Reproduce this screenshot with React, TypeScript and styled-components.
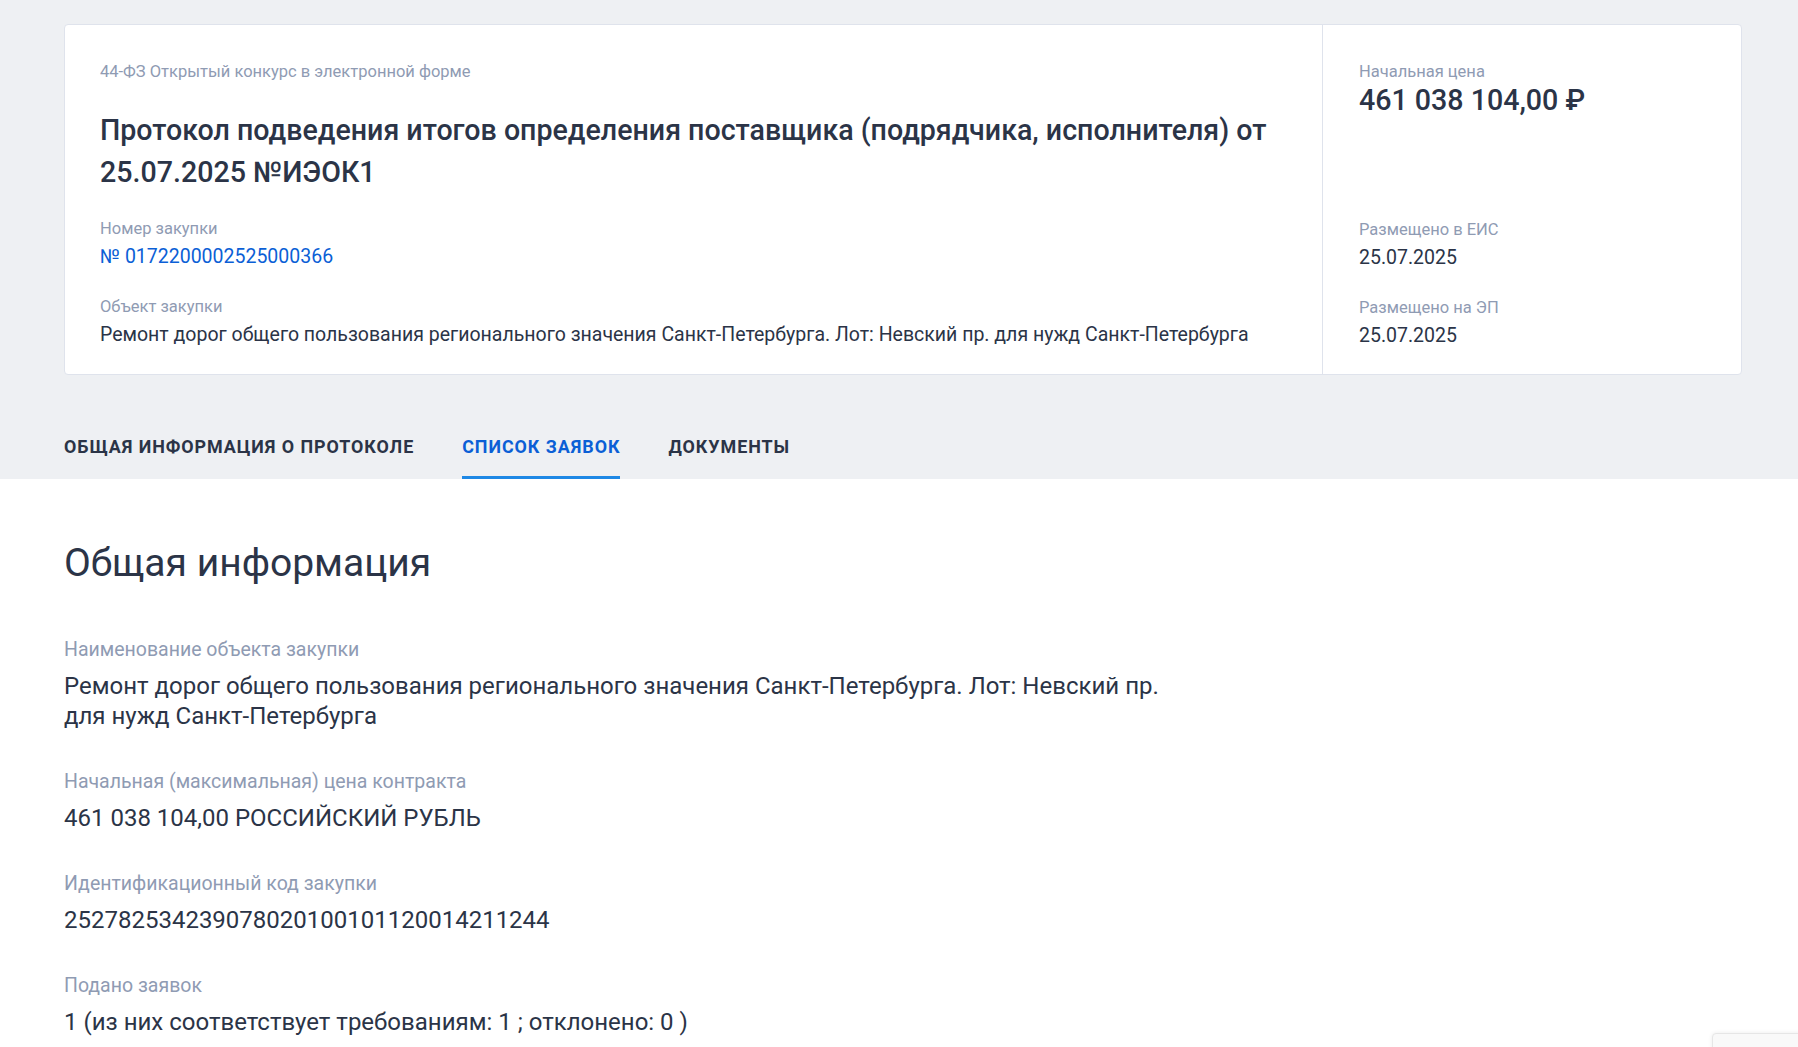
import React from "react";
import styled, { createGlobalStyle } from "styled-components";

const GlobalStyle = createGlobalStyle`
  html, body {
    margin: 0;
    padding: 0;
    background: #ffffff;
    font-family: Roboto, "Noto Sans", sans-serif;
    color: #2b3447;
  }
`;

const Header = styled.div`
  background: #eef0f3;
  padding: 24px 56px 0 64px;
`;

const Card = styled.div`
  display: flex;
  background: #ffffff;
  border: 1px solid #dfe3ec;
  border-radius: 4px;
  min-height: 349px;
`;

const CardMain = styled.div`
  flex: 1;
  padding: 36px 36px 20px 35px;
  border-right: 1px solid #dfe3ec;
`;

const CardSide = styled.div`
  width: 382px;
  padding: 36px 0 20px 36px;
  display: flex;
  flex-direction: column;
`;

const Caption = styled.div`
  font-size: 16.5px;
  line-height: 22px;
  color: #8f9bb3;
`;

const Title = styled.h1`
  margin: 26px 0 25px;
  font-size: 28.6px;
  line-height: 42px;
  font-weight: 500;
  color: #2b3447;
`;

const Field = styled.div<{ $gap?: number }>`
  margin-top: ${(p) => p.$gap ?? 0}px;
`;

const Value = styled.div<{ $link?: boolean }>`
  font-size: 19.5px;
  line-height: 28px;
  margin-top: 3px;
  color: ${(p) => (p.$link ? "#0b5fd6" : "#2b3447")};
`;

const Price = styled.div`
  font-size: 28.6px;
  line-height: 34px;
  font-weight: 500;
  color: #2b3447;
`;

const Spacer = styled.div`
  height: 102px;
`;

const Tabs = styled.div`
  display: flex;
  gap: 48px;
  margin-top: 44px;
`;

const Tab = styled.div<{ $active?: boolean }>`
  padding: 16px 0 17px;
  font-size: 17.9px;
  line-height: 24px;
  font-weight: 700;
  letter-spacing: 0.95px;
  text-transform: uppercase;
  color: ${(p) => (p.$active ? "#0b5fd6" : "#2b3447")};
  border-bottom: 3px solid ${(p) => (p.$active ? "#1e88e5" : "transparent")};
`;

const Body = styled.div`
  padding: 60px 64px 0;
`;

const Heading = styled.h2`
  margin: 0 0 50px;
  font-size: 39px;
  line-height: 48px;
  font-weight: 400;
  color: #2b3447;
`;

const InfoBlock = styled.div`
  margin-bottom: 38px;
  max-width: 1110px;
`;

const InfoLabel = styled.div`
  font-size: 19.5px;
  line-height: 26px;
  color: #8f9bb3;
`;

const InfoValue = styled.div`
  margin-top: 8px;
  font-size: 24px;
  line-height: 30px;
  color: #2b3447;
`;

const Badge = styled.div`
  position: fixed;
  right: -20px;
  bottom: -40px;
  width: 104px;
  height: 52px;
  background: #f9f9f9;
  border: 1px solid #e6e6e6;
  border-radius: 4px;
  box-shadow: 0 0 4px rgba(0, 0, 0, 0.08);
`;

const info = [
  {
    label: "Наименование объекта закупки",
    value:
      "Ремонт дорог общего пользования регионального значения Санкт-Петербурга. Лот: Невский пр. для нужд Санкт-Петербурга",
  },
  {
    label: "Начальная (максимальная) цена контракта",
    value: "461 038 104,00 РОССИЙСКИЙ РУБЛЬ",
  },
  {
    label: "Идентификационный код закупки",
    value: "252782534239078020100101120014211244",
  },
  {
    label: "Подано заявок",
    value: "1 (из них соответствует требованиям: 1 ; отклонено: 0 )",
  },
];

export default function App() {
  return (
    <>
      <GlobalStyle />
      <Header>
        <Card>
          <CardMain>
            <Caption>44-ФЗ Открытый конкурс в электронной форме</Caption>
            <Title>
              Протокол подведения итогов определения поставщика (подрядчика,
              исполнителя) от 25.07.2025 №ИЭОК1
            </Title>
            <Field>
              <Caption>Номер закупки</Caption>
              <Value $link>№ 0172200002525000366</Value>
            </Field>
            <Field $gap={25}>
              <Caption>Объект закупки</Caption>
              <Value>
                Ремонт дорог общего пользования регионального значения
                Санкт-Петербурга. Лот: Невский пр. для нужд Санкт-Петербурга
              </Value>
            </Field>
          </CardMain>
          <CardSide>
            <Caption>Начальная цена</Caption>
            <Price>461 038 104,00 ₽</Price>
            <Spacer />
            <Field>
              <Caption>Размещено в ЕИС</Caption>
              <Value>25.07.2025</Value>
            </Field>
            <Field $gap={25}>
              <Caption>Размещено на ЭП</Caption>
              <Value>25.07.2025</Value>
            </Field>
          </CardSide>
        </Card>
        <Tabs>
          <Tab>Общая информация о протоколе</Tab>
          <Tab $active>Список заявок</Tab>
          <Tab>Документы</Tab>
        </Tabs>
      </Header>
      <Body>
        <Heading>Общая информация</Heading>
        {info.map((row) => (
          <InfoBlock key={row.label}>
            <InfoLabel>{row.label}</InfoLabel>
            <InfoValue>{row.value}</InfoValue>
          </InfoBlock>
        ))}
      </Body>
      <Badge />
    </>
  );
}
